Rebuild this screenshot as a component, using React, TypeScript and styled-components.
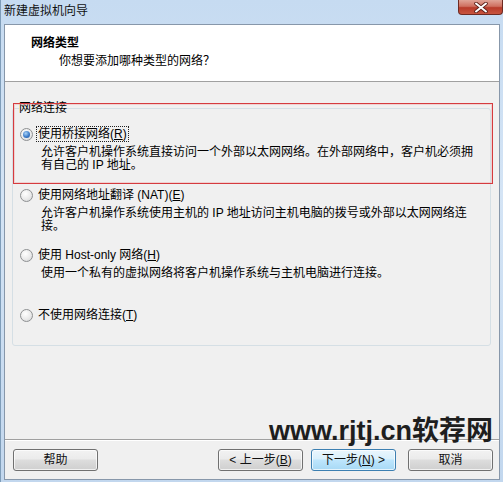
import React from "react";
import styled, { createGlobalStyle } from "styled-components";

const Global = createGlobalStyle`
  html, body { margin: 0; padding: 0; background: #ffffff; }
  body { font-family: "Liberation Sans", "Noto Sans CJK SC", sans-serif; font-size: 12px; color: #000; }
  * { box-sizing: border-box; }
`;

const Window = styled.div`
  position: relative;
  width: 503px;
  height: 482px;
  padding: 0 3px 2px 3px;
  display: flex;
  flex-direction: column;
  background: linear-gradient(180deg, #c6dbf1 0%, #d4e4f5 40%, #c2d7ee 100%);
  border-left: 1px solid #7f9db9;
`;

const TitleBar = styled.div`
  height: 24px;
  display: flex;
  align-items: flex-start;
  justify-content: space-between;
`;

const TitleText = styled.span`
  margin-top: 3px;
  font-family: "Noto Sans CJK SC", sans-serif;
  font-size: 12px;
  line-height: 14px;
  color: #111;
`;

const CloseButton = styled.div`
  width: 45px;
  height: 15px;
  margin-right: -3px;
  border: 1px solid #6e2a22;
  border-top: none;
  border-radius: 0 0 4px 4px;
  background: linear-gradient(180deg, #e0a497 0%, #cf7060 45%, #b83b2a 55%, #c8553f 100%);
  display: flex;
  align-items: center;
  justify-content: center;
`;

const Client = styled.div`
  flex: 1;
  display: flex;
  flex-direction: column;
  border: 1px solid #8797aa;
  background: #f0f0f0;
`;

const Header = styled.div`
  height: 57px;
  background: #ffffff;
  border-bottom: 1px solid #a0a0a0;
  padding: 10px 0 0 26px;
  display: flex;
  flex-direction: column;
  gap: 4px;
`;

const HeaderTitle = styled.div`
  font-family: "Noto Sans CJK SC", sans-serif;
  font-weight: 700;
  font-size: 12px;
  line-height: 14px;
`;

const HeaderSub = styled.div`
  margin-left: 28px;
  font-family: "Noto Sans CJK SC", sans-serif;
  font-size: 12px;
  line-height: 14px;
`;

const Body = styled.div`
  position: relative;
  height: 357px;
  padding: 20px 8px 0 7px;
`;

const GroupBox = styled.fieldset`
  margin: 0;
  height: 244px;
  border: 1px solid #d5dfe5;
  border-radius: 3px;
  padding: 11px 0 0 7px;
`;

const Legend = styled.legend`
  padding: 0;
  margin-left: -1px;
  font-size: 12px;
  line-height: 13px;
`;

const Option = styled.div<{ $height: number }>`
  height: ${(p) => p.$height}px;
  display: flex;
  flex-direction: column;
`;

const RadioRow = styled.div`
  height: 16px;
  display: flex;
  align-items: center;
  gap: 3px;
`;

const Radio = styled.span<{ $checked?: boolean }>`
  width: 13px;
  height: 13px;
  flex: none;
  border-radius: 50%;
  border: 1px solid #8e9092;
  background: radial-gradient(circle at 40% 35%, #ffffff 0%, #eaeaea 55%, #cfd1d3 100%);
  display: flex;
  align-items: center;
  justify-content: center;
  &::after {
    content: "";
    display: ${(p) => (p.$checked ? "block" : "none")};
    width: 7px;
    height: 7px;
    border-radius: 50%;
    background: radial-gradient(circle at 40% 35%, #a9d3f7 0%, #3d7cc9 55%, #1b4f95 100%);
  }
`;

const Label = styled.span<{ $focused?: boolean }>`
  line-height: 14px;
  padding: 0 1px;
  border: 1px ${(p) => (p.$focused ? "dotted #222" : "solid transparent")};
`;

const Desc = styled.div`
  margin: 4px 0 0 21px;
  line-height: 13px;
`;

const Highlight = styled.div`
  position: absolute;
  left: 8px;
  top: 21px;
  width: 480px;
  height: 81px;
  border: 1px solid #d53b3f;
  box-shadow: inset 0 0 0 1px rgba(240, 170, 170, 0.45);
  pointer-events: none;
`;

const Footer = styled.div`
  height: 40px;
  border-top: 1px solid #a0a0a0;
  box-shadow: inset 0 1px 0 #ffffff;
  padding: 9px 6px 0 8px;
  display: flex;
  align-items: flex-start;
`;

const Button = styled.div<{ $primary?: boolean; $gap?: number }>`
  width: 85px;
  height: 22px;
  margin-left: ${(p) => p.$gap ?? 0}px;
  border: 1px solid ${(p) => (p.$primary ? "#3c7fb1" : "#707070")};
  border-radius: 3px;
  background: ${(p) =>
    p.$primary
      ? "linear-gradient(180deg, #eaf6fd 0%, #d9f0fc 45%, #bee6fd 50%, #a7d9f5 100%)"
      : "linear-gradient(180deg, #f2f2f2 0%, #ebebeb 45%, #dddddd 50%, #cfcfcf 100%)"};
  box-shadow: inset 0 0 0 1px rgba(255, 255, 255, 0.7);
  display: flex;
  align-items: center;
  justify-content: center;
  font-size: 12px;
  line-height: 14px;
  color: #111;
`;

const Spacer = styled.div`
  flex: 1;
`;

const Watermark = styled.div`
  position: absolute;
  right: 10px;
  top: 414px;
  font-family: "Liberation Sans", "Noto Sans CJK SC", sans-serif;
  font-weight: 700;
  font-size: 27px;
  line-height: 34px;
  color: #1e1e1e;
  letter-spacing: 0;
  pointer-events: none;
`;

export default function App() {
  return (
    <>
      <Global />
      <Window>
        <TitleBar>
          <TitleText>新建虚拟机向导</TitleText>
          <CloseButton>
            <svg width="14" height="11" viewBox="0 0 14 11">
              <path d="M2 1.5 L12 9.5 M12 1.5 L2 9.5" stroke="#5a1f18" strokeWidth="3.6" strokeLinecap="round" />
              <path d="M2 1.5 L12 9.5 M12 1.5 L2 9.5" stroke="#ffffff" strokeWidth="2" strokeLinecap="round" />
            </svg>
          </CloseButton>
        </TitleBar>
        <Client>
          <Header>
            <HeaderTitle>网络类型</HeaderTitle>
            <HeaderSub>你想要添加哪种类型的网络？</HeaderSub>
          </Header>
          <Body>
            <GroupBox>
              <Legend>网络连接</Legend>
              <Option $height={61}>
                <RadioRow>
                  <Radio $checked />
                  <Label $focused>
                    使用桥接网络(<u>R</u>)
                  </Label>
                </RadioRow>
                <Desc>
                  允许客户机操作系统直接访问一个外部以太网网络。在外部网络中，客户机必须拥
                  <br />
                  有自己的 IP 地址。
                </Desc>
              </Option>
              <Option $height={60}>
                <RadioRow>
                  <Radio />
                  <Label>
                    使用网络地址翻译 (NAT)(<u>E</u>)
                  </Label>
                </RadioRow>
                <Desc>
                  允许客户机操作系统使用主机的 IP 地址访问主机电脑的拨号或外部以太网网络连
                  <br />
                  接。
                </Desc>
              </Option>
              <Option $height={60}>
                <RadioRow>
                  <Radio />
                  <Label>
                    使用 Host-only 网络(<u>H</u>)
                  </Label>
                </RadioRow>
                <Desc>使用一个私有的虚拟网络将客户机操作系统与主机电脑进行连接。</Desc>
              </Option>
              <Option $height={20}>
                <RadioRow>
                  <Radio />
                  <Label>
                    不使用网络连接(<u>T</u>)
                  </Label>
                </RadioRow>
              </Option>
            </GroupBox>
            <Highlight />
          </Body>
          <Footer>
            <Button>帮助</Button>
            <Spacer />
            <Button>
              &lt; 上一步(<u>B</u>)
            </Button>
            <Button $primary $gap={8}>
              下一步(<u>N</u>) &gt;
            </Button>
            <Button $gap={12}>取消</Button>
          </Footer>
        </Client>
        <Watermark>www.rjtj.cn软荐网</Watermark>
      </Window>
    </>
  );
}
